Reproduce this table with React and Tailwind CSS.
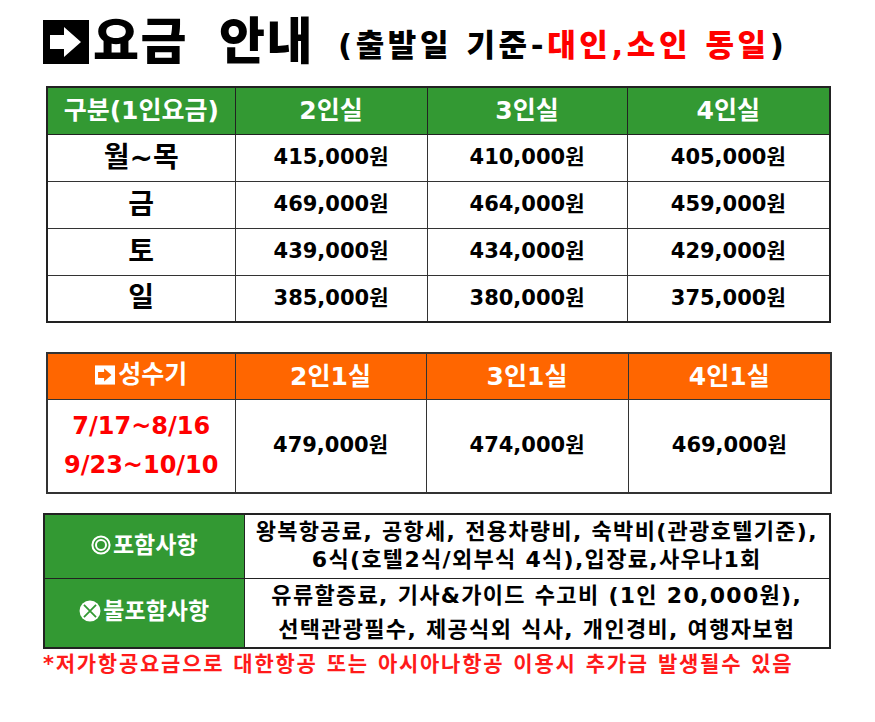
import React from "react";

const prices = [
  { day: "월~목", p: ["415,000원", "410,000원", "405,000원"] },
  { day: "금", p: ["469,000원", "464,000원", "459,000원"] },
  { day: "토", p: ["439,000원", "434,000원", "429,000원"] },
  { day: "일", p: ["385,000원", "380,000원", "375,000원"] },
];

function ArrowBox({ className, bg, fg }) {
  return (
    <svg viewBox="0 0 46 44" className={className}>
      <rect x="0" y="0" width="46" height="44" fill={bg} />
      <polygon
        points="7,15 21,15 21,7 38,22 21,37 21,29 7,29"
        fill={fg}
      />
    </svg>
  );
}

function RingIcon() {
  return (
    <svg viewBox="0 0 20 20" className="h-[20px] w-[20px]">
      <circle cx="10" cy="10" r="8.6" fill="none" stroke="white" strokeWidth="2" />
      <circle cx="10" cy="10" r="5" fill="none" stroke="white" strokeWidth="2" />
    </svg>
  );
}

function CrossIcon() {
  return (
    <svg viewBox="0 0 20 20" className="h-[22px] w-[22px]">
      <circle cx="10" cy="10" r="9.5" fill="white" />
      <path d="M4.5 4.5 L15.5 15.5 M15.5 4.5 L4.5 15.5" stroke="#339933" strokeWidth="1.6" />
    </svg>
  );
}

export default function App() {
  const font = "font-[family-name:'DejaVu_Sans','Noto_Sans_CJK_KR',sans-serif]";

  return (
    <div className={`${font} w-[875px] h-[722px] bg-white pl-[43px] pt-[19px] text-black`}>
      {/* Title */}
      <div className="flex h-[46px] items-center">
        <ArrowBox className="h-[44px] w-[46px]" bg="#000" fg="#fff" />
        <span className="ml-[4px] text-[50px] font-black leading-none tracking-[1.5px]">
          요금 <span className="ml-[12px]">안내</span>
        </span>
        <span className="ml-[24px] mt-[6px] text-[31px] font-black leading-none tracking-[3.6px]">
          (출발일 기준-<span className="text-[#ff0000]">대인,소인 동일</span>)
        </span>
      </div>

      {/* Regular season */}
      <table className="ml-[3px] mt-[21px] w-[785px] table-fixed border-collapse border-2 border-[#222]">
        <colgroup>
          <col className="w-[188px]" />
          <col className="w-[192px]" />
          <col className="w-[200px]" />
          <col />
        </colgroup>
        <thead>
          <tr className="h-[47px] bg-[#339933] text-[25px] font-bold text-white">
            <th className="border border-[#222]">구분(1인요금)</th>
            <th className="border border-[#222]">2인실</th>
            <th className="border border-[#222]">3인실</th>
            <th className="border border-[#222]">4인실</th>
          </tr>
        </thead>
        <tbody>
          {prices.map((r) => (
            <tr key={r.day} className="h-[47px]">
              <td className="border border-[#333] text-center text-[28px] font-bold">{r.day}</td>
              {r.p.map((v, i) => (
                <td key={i} className="border border-[#333] text-center text-[21px] font-bold">
                  {v}
                </td>
              ))}
            </tr>
          ))}
        </tbody>
      </table>

      {/* Peak season */}
      <table className="ml-[3px] mt-[29px] w-[786px] table-fixed border-collapse border-2 border-[#333]">
        <colgroup>
          <col className="w-[188px]" />
          <col className="w-[191px]" />
          <col className="w-[202px]" />
          <col />
        </colgroup>
        <thead>
          <tr className="h-[46px] bg-[#ff6600] text-[25px] font-bold text-white">
            <th className="border border-[#333]">
              <span className="inline-flex items-center gap-[3px]">
                <ArrowBox className="h-[22px] w-[20px]" bg="#fff" fg="#ff6600" />
                성수기
              </span>
            </th>
            <th className="border border-[#333]">2인1실</th>
            <th className="border border-[#333]">3인1실</th>
            <th className="border border-[#333]">4인1실</th>
          </tr>
        </thead>
        <tbody>
          <tr className="h-[94px]">
            <td className="border border-[#333] text-center text-[24px] font-bold leading-[39px] text-[#ff0000]">
              7/17~8/16
              <br />
              9/23~10/10
            </td>
            <td className="border border-[#333] text-center text-[21px] font-bold">479,000원</td>
            <td className="border border-[#333] text-center text-[21px] font-bold">474,000원</td>
            <td className="border border-[#333] text-center text-[21px] font-bold">469,000원</td>
          </tr>
        </tbody>
      </table>

      {/* Included / excluded */}
      <table className="mt-[19px] w-[788px] table-fixed border-collapse border-2 border-[#222]">
        <colgroup>
          <col className="w-[200px]" />
          <col />
        </colgroup>
        <tbody>
          <tr className="h-[64px]">
            <td className="border border-[#222] bg-[#339933] text-center text-[23px] font-bold text-white">
              <span className="inline-flex items-center gap-[2px]">
                <RingIcon />
                포함사항
              </span>
            </td>
            <td className="border border-[#222] text-center text-[22px] font-bold leading-[28px] tracking-[1.3px]">
              왕복항공료, 공항세, 전용차량비, 숙박비(관광호텔기준),
              <br />
              6식(호텔2식/외부식 4식),입장료,사우나1회
            </td>
          </tr>
          <tr className="h-[64px]">
            <td className="border border-[#222] bg-[#339933] text-center text-[23px] font-bold text-white">
              <span className="inline-flex items-center gap-[2px]">
                <CrossIcon />
                불포함사항
              </span>
            </td>
            <td className="border border-[#222] text-center text-[22px] font-bold leading-[34px] tracking-[1.3px]">
              유류할증료, 기사&amp;가이드 수고비 (1인 20,000원),
              <br />
              선택관광필수, 제공식외 식사, 개인경비, 여행자보험
            </td>
          </tr>
        </tbody>
      </table>

      <p className="mt-[1px] text-[21px] font-bold leading-[28px] tracking-[1.75px] text-[#ff1a1a]">
        *저가항공요금으로 대한항공 또는 아시아나항공 이용시 추가금 발생될수 있음
      </p>
    </div>
  );
}
